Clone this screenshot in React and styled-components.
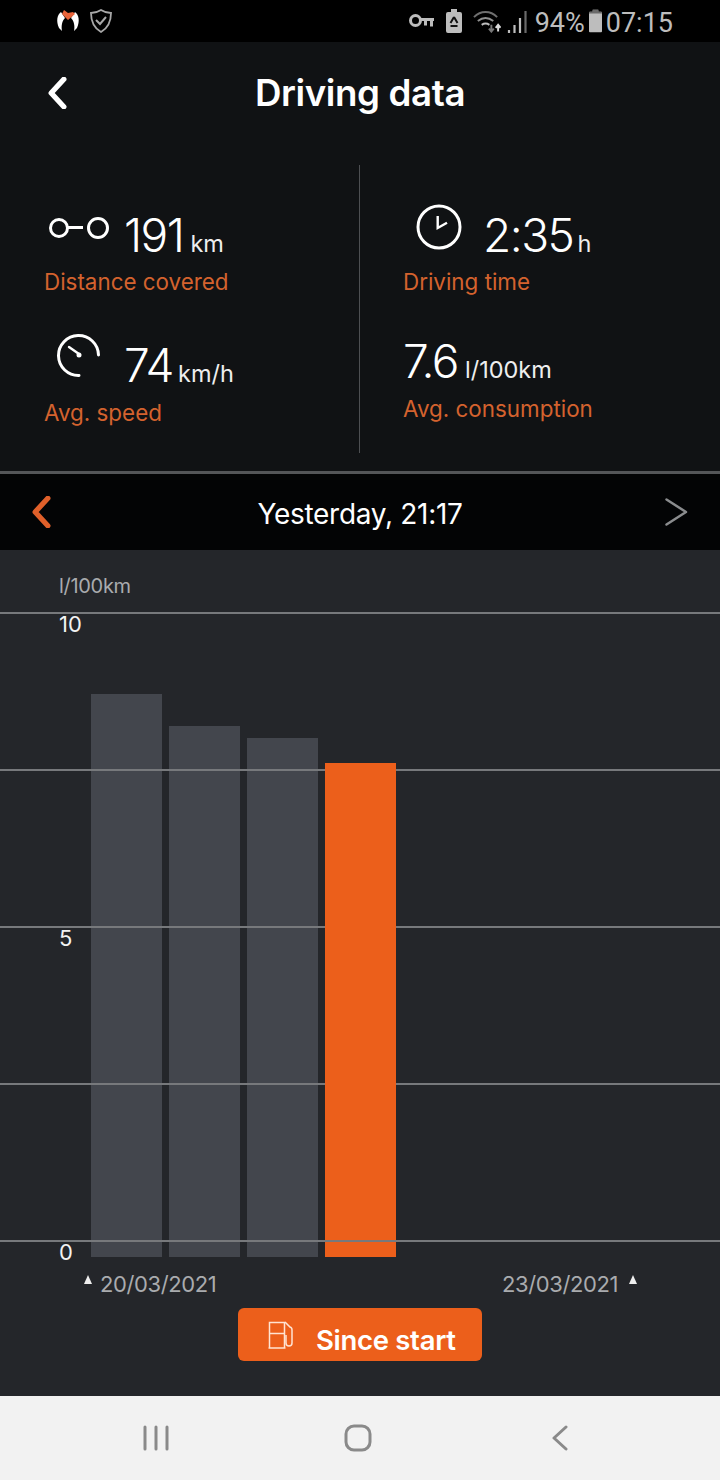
import React from 'react';
import styled, { createGlobalStyle } from 'styled-components';

const Global = createGlobalStyle`
    html, body {
        margin: 0;
        padding: 0;
        background: #101214;
    }
    * {
        box-sizing: border-box;
    }
`;

const Screen = styled.div`
    width: 720px;
    height: 1480px;
    display: flex;
    flex-direction: column;
    font-family: Inter, "Liberation Sans", sans-serif;
    color: #fff;
    overflow: hidden;
`;

const StatusBar = styled.div`
    height: 42px;
    background: #000;
    display: flex;
    align-items: center;
    justify-content: space-between;
    padding: 0 47px 0 56px;
`;

const StatusGroup = styled.div`
    display: flex;
    align-items: center;
    gap: ${p => p.$gap}px;
`;

const StatusText = styled.span`
    font-family: Roboto, sans-serif;
    font-size: 27px;
    line-height: 42px;
    color: #bdbdbd;
    margin-top: 4px;
    margin-left: ${p => p.$ml || 0}px;
`;

const Header = styled.div`
    height: 123px;
    background: #101214;
    padding: 28px 0 0 48px;
    position: relative;
    display: flex;
    align-items: flex-start;
`;

const BackButton = styled.div`
    width: 26px;
    height: 46px;
    display: flex;
    align-items: center;
`;

const Title = styled.div`
    position: absolute;
    left: 0;
    right: 0;
    top: 27px;
    text-align: center;
    font-size: 36.7px;
    line-height: 48px;
    font-weight: 600;
    letter-spacing: -0.4px;
`;

const Stats = styled.div`
    height: 306px;
    background: #101214;
    display: grid;
    grid-template-columns: 359px 1fr;
    padding-bottom: 18px;
`;

const StatColumn = styled.div`
    padding-left: ${p => p.$pad}px;
    border-left: ${p => (p.$divided ? '1px solid #4d4f52' : 'none')};
`;

const Stat = styled.div`
    margin-top: ${p => p.$top}px;
`;

const ValueRow = styled.div`
    display: flex;
    align-items: baseline;
    height: 56px;
    padding-left: ${p => p.$indent || 0}px;
`;

const IconSlot = styled.div`
    width: ${p => p.$w}px;
    align-self: center;
    display: flex;
    margin-top: ${p => p.$mt || 0}px;
`;

const Value = styled.span`
    font-size: 46px;
    line-height: 56px;
    font-weight: 300;
    letter-spacing: -1.5px;
`;

const Unit = styled.span`
    font-size: 23.5px;
    font-weight: 400;
    margin-left: ${p => p.$ml || 7}px;
    color: #eee;
`;

const StatLabel = styled.div`
    font-size: 22.4px;
    line-height: 30px;
    color: #d4622e;
    margin-top: ${p => p.$mt || 0}px;
`;

const DateBar = styled.div`
    height: 79px;
    background: #030405;
    border-top: 3px solid #545658;
    display: flex;
    align-items: center;
    justify-content: space-between;
    padding: 0 32px;
`;

const DateText = styled.div`
    font-size: 28px;
    font-weight: 400;
    letter-spacing: -0.3px;
    margin: 4px 0 0 4px;
`;

const Chart = styled.div`
    height: 846px;
    background: #24262a;
    display: flex;
    flex-direction: column;
`;

const AxisUnit = styled.div`
    height: 62px;
    padding: 24px 0 0 59px;
    font-size: 20px;
    line-height: 24px;
    letter-spacing: -0.3px;
    color: #a9abae;
`;

const Plot = styled.div`
    position: relative;
    height: 645px;
    display: flex;
    align-items: flex-end;
    gap: 7px;
    padding-left: 91px;
`;

const Bar = styled.div`
    width: 71px;
    background: #43464d;
`;

// the orange bar covers the grid, only the zero line stays on top of it
const ActiveBar = styled(Bar)`
    position: relative;
    z-index: 1;
    background: #ec5f1b;
`;

const GridLines = styled.div`
    position: absolute;
    left: 0;
    right: 0;
    top: 0;
    height: 630px;
    display: flex;
    flex-direction: column;
    justify-content: space-between;
`;

const GridLine = styled.div`
    position: relative;
    height: 2px;
    background: #77797c;
    z-index: ${p => (p.$front ? 2 : 'auto')};
`;

const GridLabel = styled.span`
    position: absolute;
    left: 59px;
    top: 0;
    font-size: 22px;
    line-height: 24px;
    color: #f2f2f2;
`;

const DateRow = styled.div`
    display: flex;
    justify-content: space-between;
    padding: 13px 83px 0 84px;
`;

const DateMark = styled.div`
    display: flex;
    align-items: flex-start;
    gap: ${p => p.$gap}px;
    font-size: 22px;
    line-height: 28px;
    letter-spacing: -0.4px;
    color: #a9abae;
`;

const Triangle = styled.span`
    width: 0;
    height: 0;
    margin-top: 5px;
    border-left: 4px solid transparent;
    border-right: 4px solid transparent;
    border-bottom: 9px solid #eee;
`;

const ButtonRow = styled.div`
    display: flex;
    justify-content: center;
    margin-top: 10px;
`;

const StartButton = styled.div`
    width: 244px;
    height: 53px;
    background: #ec5f1b;
    border-radius: 6px;
    display: flex;
    align-items: center;
    padding: 0 0 0 30px;
    gap: 22px;
    font-size: 27.5px;
    font-weight: 600;
    letter-spacing: -0.3px;
    color: #fff;
`;

const ButtonLabel = styled.span`
    margin-top: 10px;
`;

const NavBar = styled.div`
    height: 84px;
    background: #f2f2f2;
    display: grid;
    grid-template-columns: repeat(3, 202px);
    padding-left: 55px;
    align-items: center;
    justify-items: center;
`;

const VpnKey = () => (
    <svg width="26" height="14" viewBox="0 0 26 14" fill="none" stroke="#bdbdbd" strokeWidth="3">
        <circle cx="6.500" cy="6.500" r="5" />
        <path d="M11 5.500h14M22.500 5.500v7M16.500 5.500v6" />
    </svg>
);

const RecycleBattery = () => (
    <svg width="16" height="24" viewBox="0 0 16 24">
        <path d="M5 0h6v3h3a2 2 0 0 1 2 2v17a2 2 0 0 1-2 2H2a2 2 0 0 1-2-2V5a2 2 0 0 1 2-2h3z" fill="#bdbdbd" />
        <path d="M8 8l-3.500 6M8 8l3.500 6M4.500 17h7" stroke="#111" strokeWidth="2" fill="none" />
    </svg>
);

const WifiData = () => (
    <svg width="28" height="24" viewBox="0 0 29 24" fill="none" stroke="#8f8f8f" strokeWidth="2">
        <path d="M1 8c7-7 17-7 24 0" stroke="#6f6f6f" />
        <path d="M5 12c5-4 11-4 16 0" />
        <path d="M9 16c3-2 5-2 8 0" stroke="#bdbdbd" />
        <path d="M19 16v7M16.500 20l2.500 3 2.500-3" stroke="#777" />
        <path d="M26 23v-7M23.500 19l2.500-3 2.500 3" stroke="#dcdcdc" />
    </svg>
);

const Signal = () => (
    <svg width="20" height="24" viewBox="0 0 20 24" fill="none" strokeWidth="2.200">
        <path d="M2 24v-3M7.500 24v-8M13 24V9" stroke="#bdbdbd" />
        <path d="M18.500 24V2" stroke="#6a6a6a" />
    </svg>
);

const BatteryIcon = () => (
    <svg width="13" height="24" viewBox="0 0 14 24">
        <path d="M4 0h6v2h3a1 1 0 0 1 1 1v20a1 1 0 0 1-1 1H1a1 1 0 0 1-1-1V3a1 1 0 0 1 1-1h3z" fill="#bdbdbd" />
        <path d="M4 0h6v2h3a1 1 0 0 1 1 1v1H0V3a1 1 0 0 1 1-1h3z" fill="#6a6a6a" />
    </svg>
);

const AppLogo = () => (
    <svg width="24" height="24" viewBox="0 0 24 24">
        <path d="M5 3c-4 3-5 9-2 16l3 3c-1-5 0-10 3-13z" fill="#fff" />
        <path d="M19 3c4 3 5 9 2 16l-3 3c1-5 0-10-3-13z" fill="#fff" />
        <path d="M6 5l2-4 4 3 5-1 2 2-7 6z" fill="#e9643a" />
    </svg>
);

const ShieldIcon = () => (
    <svg width="22" height="24" viewBox="0 0 22 24" fill="none" stroke="#a8a8a8">
        <path d="M11 1c3 2 6 3 10 3 0 9-3 15-10 19C4 19 1 13 1 4c4 0 7-1 10-3z" strokeWidth="1.800" />
        <path d="M6 11l4 4 6-7" strokeWidth="2" />
    </svg>
);

const ChevronLeft = ({ color = '#fff' }) => (
    <svg width="19" height="32" viewBox="0 0 18 30" fill="none" stroke={color} strokeWidth="5" strokeLinecap="round" strokeLinejoin="round">
        <path d="M15 2L3 15l12 13" />
    </svg>
);

const ChevronNext = () => (
    <svg width="23" height="28" viewBox="0 0 23 28" fill="none" stroke="#8a8c8e" strokeWidth="2.500" strokeLinecap="round" strokeLinejoin="round">
        <path d="M1.500 1.500L21 14 1.500 26.500" />
    </svg>
);

const LinkIcon = () => (
    <svg width="62" height="24" viewBox="0 0 62 24" fill="none" stroke="#fff" strokeWidth="3">
        <circle cx="11" cy="12" r="8.500" />
        <path d="M19.500 11.500H35" />
        <circle cx="50" cy="12" r="9.500" />
    </svg>
);

const GaugeIcon = () => (
    <svg width="44" height="44" viewBox="0 0 44 44" fill="none" stroke="#fff" strokeWidth="3" strokeLinecap="round">
        <path d="M41.500 21A20 20 0 1 0 22 41.500" />
        <path d="M12 13l10 7" strokeWidth="2.400" />
        <circle cx="22" cy="21" r="2.500" fill="#fff" stroke="none" />
    </svg>
);

const ClockIcon = () => (
    <svg width="48" height="48" viewBox="0 0 48 48" fill="none" stroke="#fff" strokeWidth="3">
        <circle cx="24" cy="24" r="21" />
        <path d="M22.700 13v12l9.300-5.300" strokeWidth="2.400" />
    </svg>
);

const FuelIcon = () => (
    <svg width="26" height="28" viewBox="0 0 26 28" fill="none" stroke="#ffe3d2" strokeWidth="1.500">
        <path d="M1.500 27V1.500h15V27M0.500 27h17M1.500 12.500h15" />
        <path d="M17 1l5 5a3 3 0 0 1 2 3v13c0 4-6 4-6 0v-8" />
    </svg>
);

const NavRecent = () => (
    <svg width="26" height="26" viewBox="0 0 26 26" stroke="#8a8a8a" strokeWidth="3" strokeLinecap="round">
        <path d="M2 2v22M13 2v22M24 2v22" />
    </svg>
);

const NavHome = () => (
    <svg width="28" height="28" viewBox="0 0 28 28" fill="none" stroke="#8a8a8a" strokeWidth="3">
        <rect x="2" y="2" width="24" height="24" rx="8" />
    </svg>
);

const NavBack = () => (
    <svg width="16" height="26" viewBox="0 0 16 26" fill="none" stroke="#8a8a8a" strokeWidth="3" strokeLinecap="round" strokeLinejoin="round">
        <path d="M14 2L2 13l12 11" />
    </svg>
);

const bars = [563, 531, 519];
const activeBar = 494;
const gridLabels = ['10', '', '5', '', '0'];

const App = () => {
    return (
        <Screen>
            <Global />
            <StatusBar>
                <StatusGroup $gap={10}>
                    <AppLogo />
                    <ShieldIcon />
                </StatusGroup>
                <StatusGroup $gap={4}>
                    <StatusGroup $gap={11}>
                        <VpnKey />
                        <RecycleBattery />
                        <StatusGroup $gap={6}>
                            <WifiData />
                            <Signal />
                        </StatusGroup>
                    </StatusGroup>
                    <StatusText $ml={4}>94%</StatusText>
                    <BatteryIcon />
                    <StatusText>07:15</StatusText>
                </StatusGroup>
            </StatusBar>

            <Header>
                <BackButton>
                    <ChevronLeft />
                </BackButton>
                <Title>Driving data</Title>
            </Header>

            <Stats>
                <StatColumn $pad={44}>
                    <Stat $top={42}>
                        <ValueRow $indent={4}>
                            <IconSlot $w={76} $mt={-15}>
                                <LinkIcon />
                            </IconSlot>
                            <Value>191</Value>
                            <Unit>km</Unit>
                        </ValueRow>
                        <StatLabel $mt={4}>Distance covered</StatLabel>
                    </Stat>
                    <Stat $top={40}>
                        <ValueRow $indent={13}>
                            <IconSlot $w={67} $mt={-18}>
                                <GaugeIcon />
                            </IconSlot>
                            <Value>74</Value>
                            <Unit $ml={5}>km/h</Unit>
                        </ValueRow>
                        <StatLabel $mt={5}>Avg. speed</StatLabel>
                    </Stat>
                </StatColumn>
                <StatColumn $divided $pad={43}>
                    <Stat $top={42}>
                        <ValueRow $indent={12}>
                            <IconSlot $w={68} $mt={-16}>
                                <ClockIcon />
                            </IconSlot>
                            <Value>2:35</Value>
                            <Unit $ml={4}>h</Unit>
                        </ValueRow>
                        <StatLabel $mt={4}>Driving time</StatLabel>
                    </Stat>
                    <Stat $top={36}>
                        <ValueRow>
                            <Value>7.6</Value>
                            <Unit>l/100km</Unit>
                        </ValueRow>
                        <StatLabel $mt={5}>Avg. consumption</StatLabel>
                    </Stat>
                </StatColumn>
            </Stats>

            <DateBar>
                <ChevronLeft color="#e0602a" />
                <DateText>Yesterday, 21:17</DateText>
                <ChevronNext />
            </DateBar>

            <Chart>
                <AxisUnit>l/100km</AxisUnit>
                <Plot>
                    {bars.map((h, i) => (
                        <Bar key={i} style={{ height: h }} />
                    ))}
                    <ActiveBar style={{ height: activeBar }} />
                    <GridLines>
                        {gridLabels.map((label, i) => (
                            <GridLine key={i} $front={i === gridLabels.length - 1}>
                                {label && <GridLabel>{label}</GridLabel>}
                            </GridLine>
                        ))}
                    </GridLines>
                </Plot>
                <DateRow>
                    <DateMark $gap={8}><Triangle />20/03/2021</DateMark>
                    <DateMark $gap={11}>23/03/2021<Triangle /></DateMark>
                </DateRow>
                <ButtonRow>
                    <StartButton>
                        <FuelIcon />
                        <ButtonLabel>Since start</ButtonLabel>
                    </StartButton>
                </ButtonRow>
            </Chart>

            <NavBar>
                <NavRecent />
                <NavHome />
                <NavBack />
            </NavBar>
        </Screen>
    );
};

export default App;
